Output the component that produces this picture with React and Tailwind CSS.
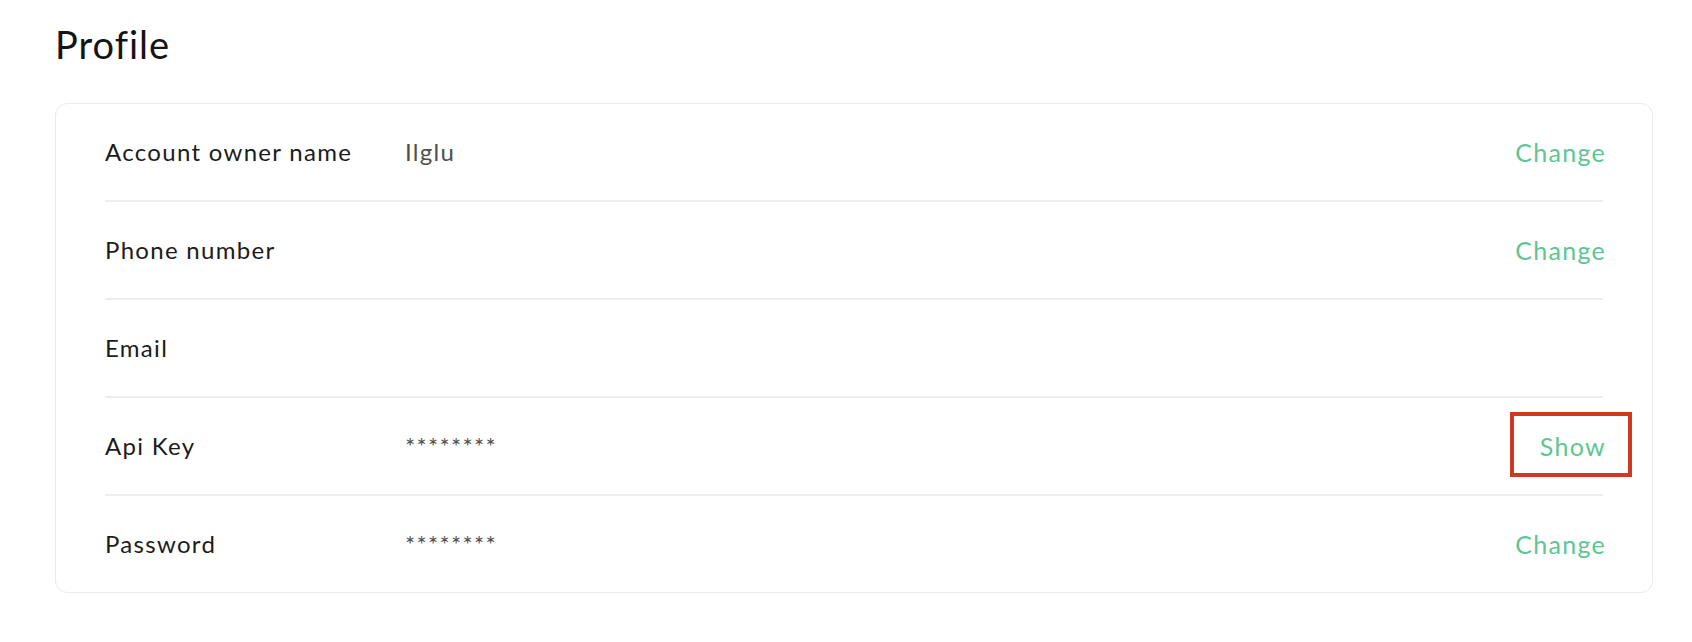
const rows = [
  { label: "Account owner name", value: "Ilglu", action: "Change" },
  { label: "Phone number", value: "", action: "Change" },
  { label: "Email", value: "", action: "" },
  { label: "Api Key", value: "********", action: "Show", highlight: true },
  { label: "Password", value: "********", action: "Change" },
];

function ProfileRow({ row }) {
  return (
    <div className="flex h-[96px] items-center">
      <div className="w-[300px] shrink-0 text-[24px] tracking-[1.3px] text-[#1c1c1c]">
        {row.label}
      </div>
      <div className="flex-1 text-[24px] tracking-[1.3px] text-[#505050]">
        {row.value}
      </div>
      {row.action && (
        <button className="relative -mr-[3px] text-[25px] leading-[30px] tracking-[1.3px] text-[#5dc693]">
          {row.action}
          {row.highlight && (
            // annotation box drawn round the Show link
            <span className="pointer-events-none absolute -top-[19px] -bottom-[16px] -left-[30px] -right-[26px] border-[4px] border-[#d0391f]" />
          )}
        </button>
      )}
    </div>
  );
}

export default function App() {
  return (
    <div
      className="min-h-screen bg-white pl-[55px] pr-[39px] pt-[22px]"
      style={{ fontFamily: "Lato, 'Open Sans', sans-serif" }}
    >
      <h1 className="text-[38px] leading-[44px] tracking-[1px] text-[#141414]">
        Profile
      </h1>

      <div className="mt-[37px] rounded-[12px] border border-[#ebebeb] px-[49px]">
        {rows.map((row, i) => (
          <div
            key={row.label}
            className={i > 0 ? "border-t-2 border-[#eeeeee]" : ""}
          >
            <ProfileRow row={row} />
          </div>
        ))}
      </div>
    </div>
  );
}
